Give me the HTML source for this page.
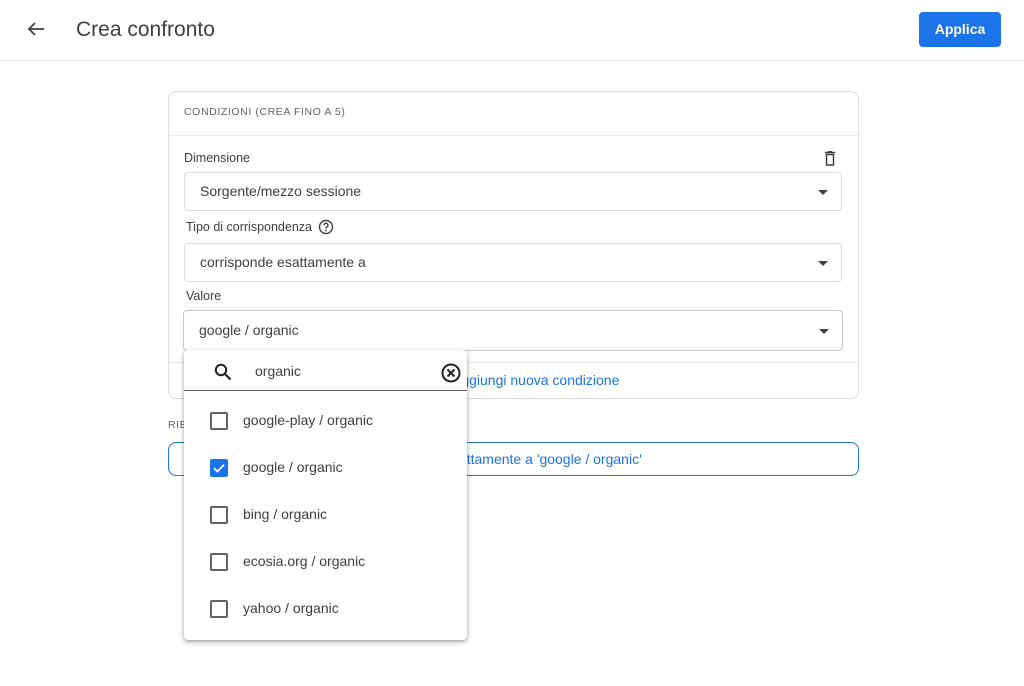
<!DOCTYPE html>
<html><head><meta charset="utf-8"><style>
*{box-sizing:border-box;margin:0;padding:0}
body{width:1024px;height:686px;background:#fff;font-family:"Liberation Sans",Arial,sans-serif;color:#202124;position:relative;overflow:hidden}
.a{position:absolute}
.hdr{left:0;top:0;width:1024px;height:61px;border-bottom:1px solid #e0e0e0}
.title{left:76px;top:18px;font-size:21px;color:#3c4043}
.btn{left:919px;top:12px;width:82px;height:35px;background:#1a73e8;border-radius:4px;color:#fff;font-size:14px;font-weight:bold;text-align:center;line-height:35px}
.card{left:168px;top:91px;width:691px;height:308px;border:1px solid #dadce0;border-radius:8px}
.lbl{font-size:12.5px;color:#3c4043}
.sel{border:1px solid #dadce0;border-radius:4px;font-size:14px;color:#3c4043;padding-left:15px}
.tri{position:absolute;right:13px;top:50%;margin-top:-2px;border-left:5px solid transparent;border-right:5px solid transparent;border-top:5px solid #3c4043}
.dd{left:184px;top:350px;width:283px;height:290px;background:#fff;border-radius:4px;box-shadow:0 2px 6px rgba(0,0,0,.3),0 1px 2px rgba(0,0,0,.15)}
.it{position:absolute;left:26px;font-size:14px;color:#3c4043}
.cb{display:inline-block;width:18px;height:18px;border:2px solid #5f6368;border-radius:2px;vertical-align:middle;margin-right:15px}
</style></head><body>
<div class="a hdr"></div>
<svg class="a" style="left:26px;top:19px" width="20" height="20" viewBox="0 0 20 20"><path d="M18 10H3M9 4L3 10L9 16" stroke="#3c4043" stroke-width="1.8" fill="none"/></svg>
<div class="a title">Crea confronto</div>
<div class="a btn">Applica</div>

<div class="a card"></div>
<div class="a" style="left:169px;top:135px;width:689px;border-top:1px solid #e8eaed"></div>
<div class="a" style="left:184px;top:106px;font-size:10.5px;letter-spacing:.6px;color:#5f6368">CONDIZIONI (CREA FINO A 5)</div>
<div class="a lbl" style="left:184px;top:151px">Dimensione</div>
<svg class="a" style="left:823px;top:151px" width="14" height="15" viewBox="0 0 14 15"><path d="M2 1.5H12M5 0.5H9M3.5 3.5H10.5V14H3.5Z" stroke="#3c4043" stroke-width="1.5" fill="none"/></svg>
<div class="a sel" style="left:184px;top:172px;width:658px;height:39px;line-height:37px">Sorgente/mezzo sessione<span class="tri"></span></div>
<div class="a lbl" style="left:186px;top:220px">Tipo di corrispondenza</div>
<svg class="a" style="left:318px;top:219px" width="16" height="16" viewBox="0 0 16 16"><circle cx="8" cy="8" r="6.5" stroke="#3c4043" stroke-width="1.4" fill="none"/><path d="M6 6.3a2 2 0 1 1 2.6 1.8C8 8.4 8 9 8 9.6" stroke="#3c4043" stroke-width="1.4" fill="none"/><circle cx="8" cy="11.5" r=".9" fill="#3c4043"/></svg>
<div class="a sel" style="left:184px;top:243px;width:658px;height:39px;line-height:37px">corrisponde esattamente a<span class="tri"></span></div>
<div class="a lbl" style="left:186px;top:289px">Valore</div>
<div class="a sel" style="left:183px;top:310px;width:660px;height:41px;line-height:39px;border-color:#c4c7c5">google / organic<span class="tri"></span></div>
<div class="a" style="left:169px;top:362px;width:689px;border-top:1px solid #e8eaed"></div>
<div class="a" style="left:452px;top:372px;font-size:14px;color:#1a73e8">Aggiungi nuova condizione</div>
<div class="a" style="left:168px;top:419px;font-size:10.5px;letter-spacing:.6px;color:#5f6368">RIEPILOGO</div>
<div class="a" style="left:168px;top:442px;width:691px;height:34px;border:1px solid #1a73e8;border-radius:8px"></div>
<div class="a" style="left:364px;top:451px;font-size:14px;color:#1a73e8">Corrisponde esattamente a 'google / organic'</div>

<div class="a dd">
<svg class="a" style="left:29px;top:12px" width="20" height="20" viewBox="0 0 20 20"><circle cx="8" cy="8" r="5.2" stroke="#202124" stroke-width="2" fill="none"/><path d="M12 12L17.5 17.5" stroke="#202124" stroke-width="2.2"/></svg>
<div class="a" style="left:71px;top:13px;font-size:14px;color:#3c4043">organic</div>
<svg class="a" style="left:256px;top:12px" width="22" height="22" viewBox="0 0 22 22"><circle cx="11" cy="11" r="8.5" stroke="#202124" stroke-width="2" fill="none"/><path d="M7.5 7.5L14.5 14.5M14.5 7.5L7.5 14.5" stroke="#202124" stroke-width="2"/></svg>
<div class="a" style="left:0;top:40px;width:283px;border-top:1px solid #5f6368"></div>
<div class="it" style="top:62px"><span class="cb"></span>google-play / organic</div>
<div class="it" style="top:109px"><span class="cb" style="background:#1a73e8;border-color:#1a73e8;position:relative"><svg style="position:absolute;left:0;top:0" width="14" height="14" viewBox="0 0 14 14"><path d="M2 7.2L5.4 10.5L12 3.8" stroke="#fff" stroke-width="1.8" fill="none"/></svg></span>google / organic</div>
<div class="it" style="top:156px"><span class="cb"></span>bing / organic</div>
<div class="it" style="top:203px"><span class="cb"></span>ecosia.org / organic</div>
<div class="it" style="top:250px"><span class="cb"></span>yahoo / organic</div>
</div>
</body></html>
